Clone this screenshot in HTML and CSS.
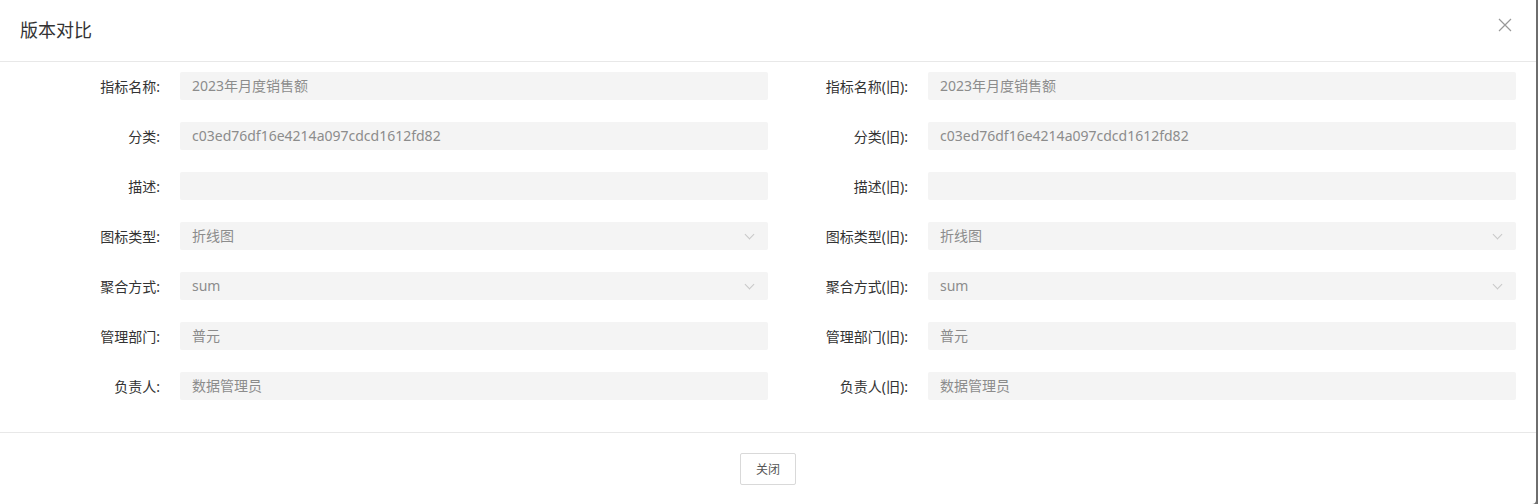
FILE: index.html
```html
<!DOCTYPE html>
<html lang="zh-CN">
<head>
    <meta charset="UTF-8">
    <meta name="viewport" content="width=device-width, initial-scale=1.0">
    <title>版本对比</title>
    <link rel="stylesheet" href="styles.css">
</head>
<body>
<div class="modal">
    <div class="modal-header">
        <span class="modal-title">版本对比</span>
        <span class="modal-close">
            <svg width="14" height="14" viewBox="0 0 14 14"><path d="M1 1L13 13M13 1L1 13" stroke="#999" stroke-width="1.2" fill="none"/></svg>
        </span>
    </div>

    <div class="modal-body">
        <div class="form-grid">
            <div class="form-item"><label>指标名称:</label><div class="field">2023年月度销售额</div></div>
            <div class="form-item"><label>指标名称(旧):</label><div class="field">2023年月度销售额</div></div>

            <div class="form-item"><label>分类:</label><div class="field">c03ed76df16e4214a097cdcd1612fd82</div></div>
            <div class="form-item"><label>分类(旧):</label><div class="field">c03ed76df16e4214a097cdcd1612fd82</div></div>

            <div class="form-item"><label>描述:</label><div class="field"></div></div>
            <div class="form-item"><label>描述(旧):</label><div class="field"></div></div>

            <div class="form-item"><label>图标类型:</label><div class="field select">折线图<i class="arrow"></i></div></div>
            <div class="form-item"><label>图标类型(旧):</label><div class="field select">折线图<i class="arrow"></i></div></div>

            <div class="form-item"><label>聚合方式:</label><div class="field select">sum<i class="arrow"></i></div></div>
            <div class="form-item"><label>聚合方式(旧):</label><div class="field select">sum<i class="arrow"></i></div></div>

            <div class="form-item"><label>管理部门:</label><div class="field">普元</div></div>
            <div class="form-item"><label>管理部门(旧):</label><div class="field">普元</div></div>

            <div class="form-item"><label>负责人:</label><div class="field">数据管理员</div></div>
            <div class="form-item"><label>负责人(旧):</label><div class="field">数据管理员</div></div>
        </div>
    </div>

    <div class="modal-footer">
        <button class="btn">关闭</button>
    </div>
</div>
</body>
</html>
```

FILE: styles.css
```css
*{
    box-sizing: border-box;
}

body{
    margin: 0;
    background-color: #6e6e6e;
    font-family: "Noto Sans", "Noto Sans CJK SC", sans-serif;
    color: #333;
}

.modal{
    width: 1536px;
    height: 504px;
    background-color: #fff;
    border-bottom-right-radius: 4px;
}

.modal-header{
    height: 62px;
    border-bottom: 1px solid #e8e8e8;
    display: flex;
    align-items: center;
    justify-content: space-between;
    padding: 0 24px 0 20px;
}

.modal-title{
    font-size: 18px;
    color: #333;
    margin-top: -4px;
}

.modal-close{
    display: flex;
    margin-top: -12px;
}

.modal-body{
    padding: 10px 20px 32px;
    border-bottom: 1px solid #e8e8e8;
}

.form-grid{
    display: grid;
    grid-template-columns: 748px 748px;
    row-gap: 22px;
}

.form-item{
    display: flex;
    align-items: center;
    height: 28px;
}

.form-item label{
    width: 160px;
    flex-shrink: 0;
    text-align: right;
    padding-right: 20px;
    font-size: 14px;
    color: #333;
}

.field{
    flex: 1;
    height: 28px;
    line-height: 28px;
    background-color: #f4f4f4;
    border-radius: 2px;
    padding: 0 12px;
    font-size: 14px;
    color: #8c8c8c;
    position: relative;
}

.arrow{
    position: absolute;
    right: 15px;
    top: 9px;
    width: 7px;
    height: 7px;
    border-right: 1px solid #c8c8c8;
    border-bottom: 1px solid #c8c8c8;
    transform: rotate(45deg);
}

.modal-footer{
    display: flex;
    justify-content: center;
    padding-top: 20px;
}

.btn{
    width: 56px;
    height: 32px;
    background-color: #fff;
    border: 1px solid #d9d9d9;
    border-radius: 2px;
    font-family: "Noto Sans", "Noto Sans CJK SC", sans-serif;
    font-size: 12px;
    color: #555;
    padding: 0;
    cursor: pointer;
}
```
